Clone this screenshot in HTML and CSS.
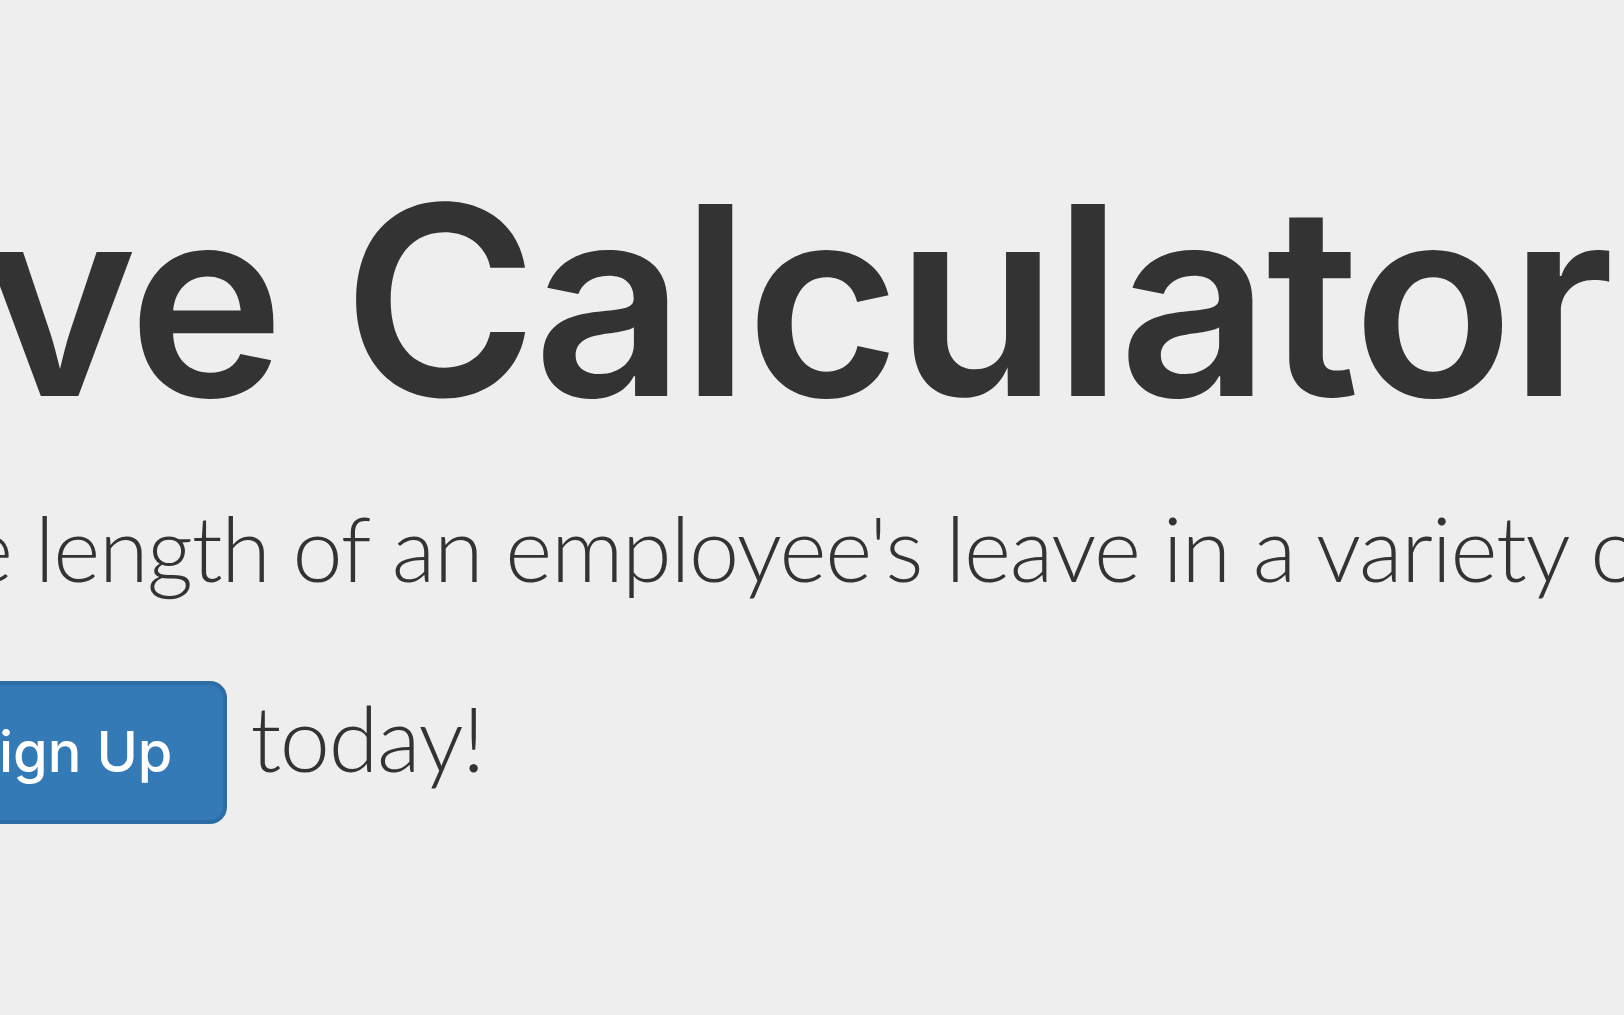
FILE: index.html
```html
<!DOCTYPE html>
<html lang="en">
<head>
<meta charset="utf-8">
<title>Leave Calculator</title>
<link rel="stylesheet" href="styles.css">
</head>
<body>
<div class="jumbotron">
  <div class="container">
    <h1 class="title">Leave Calculator</h1>
    <p class="lead">Calculate the length of an employee's leave in a variety of ways.</p>
    <p class="lead cta"><a class="btn btn-primary" href="#">Sign Up</a> today!</p>
  </div>
</div>
</body>
</html>
```
FILE: styles.css
```css
html, body {
  margin: 0;
  padding: 0;
  background: #eeeeee;
}

body {
  font-family: "Liberation Sans", Arial, sans-serif;
  color: #333333;
  overflow: hidden;
  width: 1624px;
  height: 1015px;
}

.jumbotron {
  padding-top: 155px;
  background: #eeeeee;
}

.container {
  margin-left: -480px;
  white-space: nowrap;
}

.title {
  font-family: "Inter", "Liberation Sans", sans-serif;
  font-size: 264px;
  font-weight: 600;
  line-height: 1.1;
  letter-spacing: -4px;
  margin: 0 0 38.3px 19px;
}

.lead {
  font-family: "Lato", "Liberation Sans", sans-serif;
  font-weight: 300;
  font-size: 90px;
  line-height: 127px;
  letter-spacing: -1.3px;
  margin: 0 0 63.5px;
}

.btn {
  display: inline-block;
  margin-left: 388px;
  font-family: "Inter", "Liberation Sans", sans-serif;
  font-weight: 500;
  font-size: 56px;
  line-height: 84.7px;
  letter-spacing: 0;
  padding: 25.4px 50.8px;
  border: 4.2px solid #2e6da4;
  border-radius: 17px;
  background: #337ab7;
  color: #ffffff;
  vertical-align: baseline;
  text-decoration: none;
}
```
